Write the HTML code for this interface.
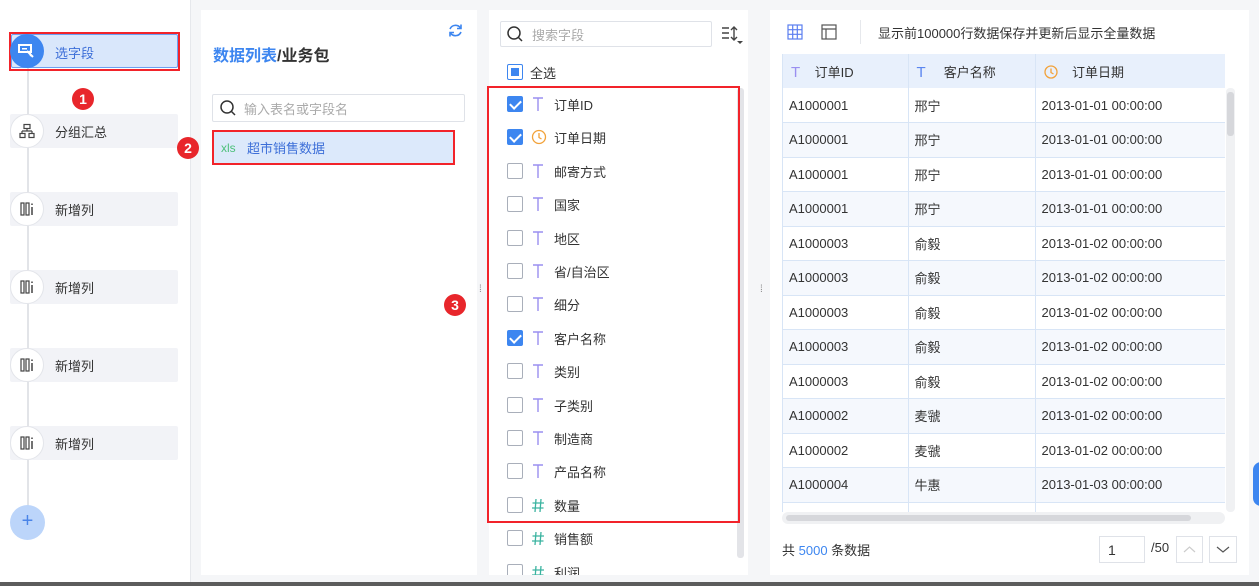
<!DOCTYPE html>
<html><head><meta charset="utf-8"><style>
*{box-sizing:border-box;margin:0;padding:0}
body{width:1259px;height:586px;overflow:hidden;background:#f5f6f8;font-family:"Liberation Sans","Noto Sans CJK SC",sans-serif;font-size:13px;color:#333;position:relative}
.a{position:absolute}
.side{left:0;top:0;width:191px;height:582px;background:#fff;border-right:1px solid #e6e8ec}
.step{left:10px;width:168px;height:34px;background:#f2f3f7;border-radius:2px}
.circ{width:34px;height:34px;border-radius:50%;background:#fff;border:1px solid #e3e5ea;left:10px;display:flex;align-items:center;justify-content:center}
.lbl{left:55px;font-size:13px;color:#333}
.red{border:2px solid #f2232a}
.badge{width:22px;height:22px;border-radius:50%;background:#e8262b;color:#fff;font-size:14px;text-align:center;line-height:22px;font-weight:bold}
.panel{background:#fff}
.cb{width:16px;height:16px;border:1px solid #a9afba;border-radius:2px;background:#fff}
.cb.on{background:#3d86f0;border-color:#3d86f0}
.cb.on:after{content:"";position:absolute;left:4px;top:1px;width:5px;height:9px;border:solid #fff;border-width:0 2px 2px 0;transform:rotate(45deg)}
td{height:34.5px;border-right:1px solid #d8e5f6;border-bottom:1px solid #d8e5f6;padding-left:6px;font-size:13px;color:#333}
tr.b td{background:#f5f8fd}
th{height:34px;background:#e8f0fc;border-right:1px solid #d8e5f6;text-align:left;font-weight:normal;padding-left:8px}
</style></head><body>
<div class="a side"></div>
<div class="a" style="left:27px;top:60px;width:2px;height:460px;background:#e2e4e8"></div>
<div class="a red" style="left:9px;top:32px;width:171px;height:39px"></div>
<div class="a" style="left:11px;top:34px;width:167px;height:34px;background:#d9e7fb;border:1px solid #6ba0f2;border-radius:2px"></div>
<div class="a" style="left:10px;top:34px;width:34px;height:34px;border-radius:50%;background:#3d86f0"></div>
<svg class="a" style="left:18px;top:42px" width="18" height="18"><rect x="1" y="3" width="12" height="7" fill="none" stroke="#fff" stroke-width="2"/><rect x="4" y="6" width="5" height="1.5" fill="#fff"/><path d="M9 9 L15 15 M11 9 L13 14" stroke="#fff" stroke-width="2"/></svg>
<div class="a lbl" style="top:43px;color:#3d6fd8">选字段</div>
<div class="a badge" style="left:72px;top:88px">1</div>
<svg width="0" height="0" style="position:absolute"><defs><g id="col"><rect x="1" y="2" width="3" height="12" fill="none" stroke="#444" stroke-width="1.2"/><rect x="6" y="2" width="3" height="12" fill="none" stroke="#444" stroke-width="1.2"/><path d="M12 6V14M12 2.5V4" stroke="#444" stroke-width="1.5"/></g></defs></svg>
<div class="a step" style="top:114px"></div><div class="a circ" style="top:114px"><svg width="16" height="16"><rect x="5" y="1.5" width="6" height="4" fill="none" stroke="#444" stroke-width="1.2"/><path d="M8 5.5V8M3 8H13M3 8V10M13 8V10" stroke="#444" stroke-width="1.2"/><rect x="1" y="10.5" width="5" height="4" fill="none" stroke="#444" stroke-width="1.2"/><rect x="10" y="10.5" width="5" height="4" fill="none" stroke="#444" stroke-width="1.2"/></svg></div><div class="a lbl" style="top:122px">分组汇总</div>
<div class="a step" style="top:192px"></div><div class="a circ" style="top:192px"><svg width="15" height="16"><use href="#col"/></svg></div><div class="a lbl" style="top:200px">新增列</div>
<div class="a step" style="top:270px"></div><div class="a circ" style="top:270px"><svg width="15" height="16"><use href="#col"/></svg></div><div class="a lbl" style="top:278px">新增列</div>
<div class="a step" style="top:348px"></div><div class="a circ" style="top:348px"><svg width="15" height="16"><use href="#col"/></svg></div><div class="a lbl" style="top:356px">新增列</div>
<div class="a step" style="top:426px"></div><div class="a circ" style="top:426px"><svg width="15" height="16"><use href="#col"/></svg></div><div class="a lbl" style="top:434px">新增列</div>
<div class="a" style="left:10px;top:505px;width:35px;height:35px;border-radius:50%;background:#bcd5fa;color:#4a84e8;text-align:center;line-height:33px;font-size:20px">+</div>

<div class="a panel" style="left:201px;top:10px;width:276px;height:565px"></div>
<svg class="a" style="left:448px;top:23px" width="15" height="15"><path d="M12.5 5A6 6 0 0 0 2 6M2.5 10A6 6 0 0 0 13 9" fill="none" stroke="#3d86f0" stroke-width="1.6"/><path d="M13 1.5V5.5H9M2 13.5V9.5H6" fill="none" stroke="#3d86f0" stroke-width="1.6"/></svg>
<div class="a" style="left:213px;top:42px;font-size:16px;font-weight:bold;color:#333"><span style="color:#3d86f0">数据列表</span>/业务包</div>
<div class="a" style="left:212px;top:94px;width:253px;height:28px;border:1px solid #dfe2e8;border-radius:2px"></div>
<svg class="a" style="left:219px;top:99px" width="18" height="18"><circle cx="8" cy="8" r="6" fill="none" stroke="#333" stroke-width="1.5"/><path d="M12.5 12.5 L16 16" stroke="#333" stroke-width="1.5"/></svg>
<div class="a" style="left:244px;top:99px;color:#aaa">输入表名或字段名</div>
<div class="a" style="left:213px;top:132px;width:240px;height:31px;background:#dce9fb"></div>
<div class="a red" style="left:212px;top:130px;width:243px;height:35px"></div>
<div class="a" style="left:221px;top:141px;color:#4cc07a;font-size:12px">xls</div>
<div class="a" style="left:247px;top:138px;color:#3d6fd8">超市销售数据</div>
<div class="a badge" style="left:177px;top:137px">2</div>
<div class="a" style="left:479px;top:284px;color:#888;font-size:10px">⁞</div>
<div class="a" style="left:760px;top:284px;color:#888;font-size:10px">⁞</div>

<div class="a panel" style="left:489px;top:10px;width:259px;height:565px"></div>
<div class="a" style="left:500px;top:21px;width:212px;height:26px;border:1px solid #dfe2e8;border-radius:2px"></div>
<svg class="a" style="left:506px;top:25px" width="18" height="18"><circle cx="8" cy="8" r="6" fill="none" stroke="#333" stroke-width="1.5"/><path d="M12.5 12.5 L16 16" stroke="#333" stroke-width="1.5"/></svg>
<div class="a" style="left:532px;top:25px;color:#aaa">搜索字段</div>
<svg class="a" style="left:721px;top:26px" width="22" height="20"><path d="M1 2H8M1 7H8M1 12H8" stroke="#444" stroke-width="1.4"/><path d="M13 1V14M10 4L13 1L16 4M10 11L13 14L16 11" fill="none" stroke="#444" stroke-width="1.4"/><path d="M16 15H22L19 18Z" fill="#444"/></svg>
<div class="a cb" style="left:507px;top:64px;border-color:#3d86f0"><div class="a" style="left:3px;top:3px;width:8px;height:8px;background:#3d86f0"></div></div>
<div class="a" style="left:530px;top:63px">全选</div>
<div class="a" style="left:737px;top:88px;width:7px;height:470px;background:#e3e4e8;border-radius:3px"></div>
<div id="fl"></div>
<div class="a red" style="left:487px;top:86px;width:253px;height:437px"></div>
<div class="a badge" style="left:444px;top:294px">3</div>

<div class="a panel" style="left:770px;top:10px;width:479px;height:565px"></div>
<svg class="a" style="left:787px;top:24px" width="16" height="16"><rect x="1" y="1" width="14" height="14" fill="none" stroke="#5b7ef0" stroke-width="1.2"/><path d="M1 5.7H15M1 10.3H15M5.7 1V15M10.3 1V15" stroke="#5b7ef0" stroke-width="1.2"/></svg>
<svg class="a" style="left:821px;top:24px" width="16" height="16"><rect x="1" y="1" width="14" height="14" fill="none" stroke="#555" stroke-width="1.2"/><path d="M1 5H15M5 5V15" stroke="#555" stroke-width="1.2"/></svg>
<div class="a" style="left:860px;top:20px;width:1px;height:24px;background:#e6e8ec"></div>
<div class="a" style="left:878px;top:23px;color:#333;white-space:nowrap">显示前100000行数据保存并更新后显示全量数据</div>
<div class="a" style="left:782px;top:54px;width:443px;height:458px;overflow:hidden;border-left:1px solid #d8e5f6">
<table style="border-collapse:collapse;width:443px;table-layout:fixed" id="tb">
<colgroup><col style="width:125px"><col style="width:127px"><col></colgroup>
<tr><th><span style="color:#9a8ff0;font-size:15px">T</span>&nbsp;&nbsp;&nbsp;&nbsp;订单ID</th><th><span style="color:#5b86f0;font-size:15px">T</span>&nbsp;&nbsp;&nbsp;&nbsp;&nbsp;客户名称</th><th><svg width="14" height="14" style="vertical-align:-2px"><circle cx="7" cy="7" r="6" fill="none" stroke="#f2a23a" stroke-width="1.3"/><path d="M7 3.5V7.5L9.5 9" fill="none" stroke="#f2a23a" stroke-width="1.3"/></svg>&nbsp;&nbsp;&nbsp;&nbsp;订单日期</th></tr>
</table></div>
<div class="a" style="left:1226px;top:88px;width:9px;height:424px;background:#f0f1f3;border-radius:4px"><div style="margin:4px 1px;width:7px;height:44px;background:#d6d7db;border-radius:3px"></div></div>
<div class="a" style="left:782px;top:512px;width:443px;height:12px;background:#f0f1f3;border-radius:6px"><div style="margin:3px 4px;width:405px;height:6px;background:#d6d7db;border-radius:3px"></div></div>
<div class="a" style="left:782px;top:540px">共 <span style="color:#3d86f0">5000</span> 条数据</div>
<div class="a" style="left:1099px;top:536px;width:46px;height:27px;border:1px solid #dfe2e8;padding:5px 8px;font-size:14px">1</div>
<div class="a" style="left:1151px;top:540px">/50</div>
<div class="a" style="left:1176px;top:536px;width:27px;height:27px;border:1px solid #dfe2e8"><svg width="25" height="25"><path d="M7 15L12.5 10L18 15" fill="none" stroke="#ccc" stroke-width="1.2"/></svg></div>
<div class="a" style="left:1209px;top:536px;width:28px;height:27px;border:1px solid #dfe2e8"><svg width="26" height="25"><path d="M7 10L13 15L19 10" fill="none" stroke="#555" stroke-width="1.2"/></svg></div>
<div class="a" style="left:1253px;top:462px;width:16px;height:44px;border-radius:8px;background:#3d86f0"></div>
<div class="a" style="left:0;top:582px;width:1259px;height:4px;background:#5c5c5c"></div>
<script>
var f=[["订单ID","T",1],["订单日期","C",1],["邮寄方式","T"],["国家","T"],["地区","T"],["省/自治区","T"],["细分","T"],["客户名称","T",1],["类别","T"],["子类别","T"],["制造商","T"],["产品名称","T"],["数量","#"],["销售额","#"],["利润","#"]];
var h="";f.forEach(function(r,i){var y=96+i*33.4;
h+='<div class="a cb'+(r[2]?' on':'')+'" style="left:507px;top:'+y+'px"></div>';
var ic=r[1]=="T"?'<svg width="14" height="16"><path d="M2 2H12M7 2V15" stroke="#9a8ff0" stroke-width="1.4"/></svg>':r[1]=="C"?'<svg width="16" height="16"><circle cx="8" cy="8" r="6.5" fill="none" stroke="#f2a23a" stroke-width="1.3"/><path d="M8 4V8.5L10.5 10" fill="none" stroke="#f2a23a" stroke-width="1.3"/></svg>':'<svg width="14" height="16"><path d="M5 2L4 15M10 2L9 15M1.5 6H13M1 11H12.5" stroke="#3bb3a0" stroke-width="1.3"/></svg>';
h+='<div class="a" style="left:531px;top:'+(y)+'px">'+ic+'</div><div class="a" style="left:554px;top:'+(y-1)+'px">'+r[0]+'</div>';});
h+='<div class="a" style="left:489px;top:575px;width:259px;height:7px;background:#f5f6f8"></div>';
document.getElementById("fl").outerHTML=h;
var d=[["A1000001","邢宁","2013-01-01"],["A1000001","邢宁","2013-01-01"],["A1000001","邢宁","2013-01-01"],["A1000001","邢宁","2013-01-01"],["A1000003","俞毅","2013-01-02"],["A1000003","俞毅","2013-01-02"],["A1000003","俞毅","2013-01-02"],["A1000003","俞毅","2013-01-02"],["A1000003","俞毅","2013-01-02"],["A1000002","麦虢","2013-01-02"],["A1000002","麦虢","2013-01-02"],["A1000004","牛惠","2013-01-03"],["A1000004","牛惠","2013-01-03"]];
var t="";d.forEach(function(r,i){t+='<tr'+(i%2?' class="b"':'')+'><td>'+r[0]+'</td><td>'+r[1]+'</td><td>'+r[2]+' 00:00:00</td></tr>';});
document.getElementById("tb").insertAdjacentHTML("beforeend",t);
</script>
</body></html>
